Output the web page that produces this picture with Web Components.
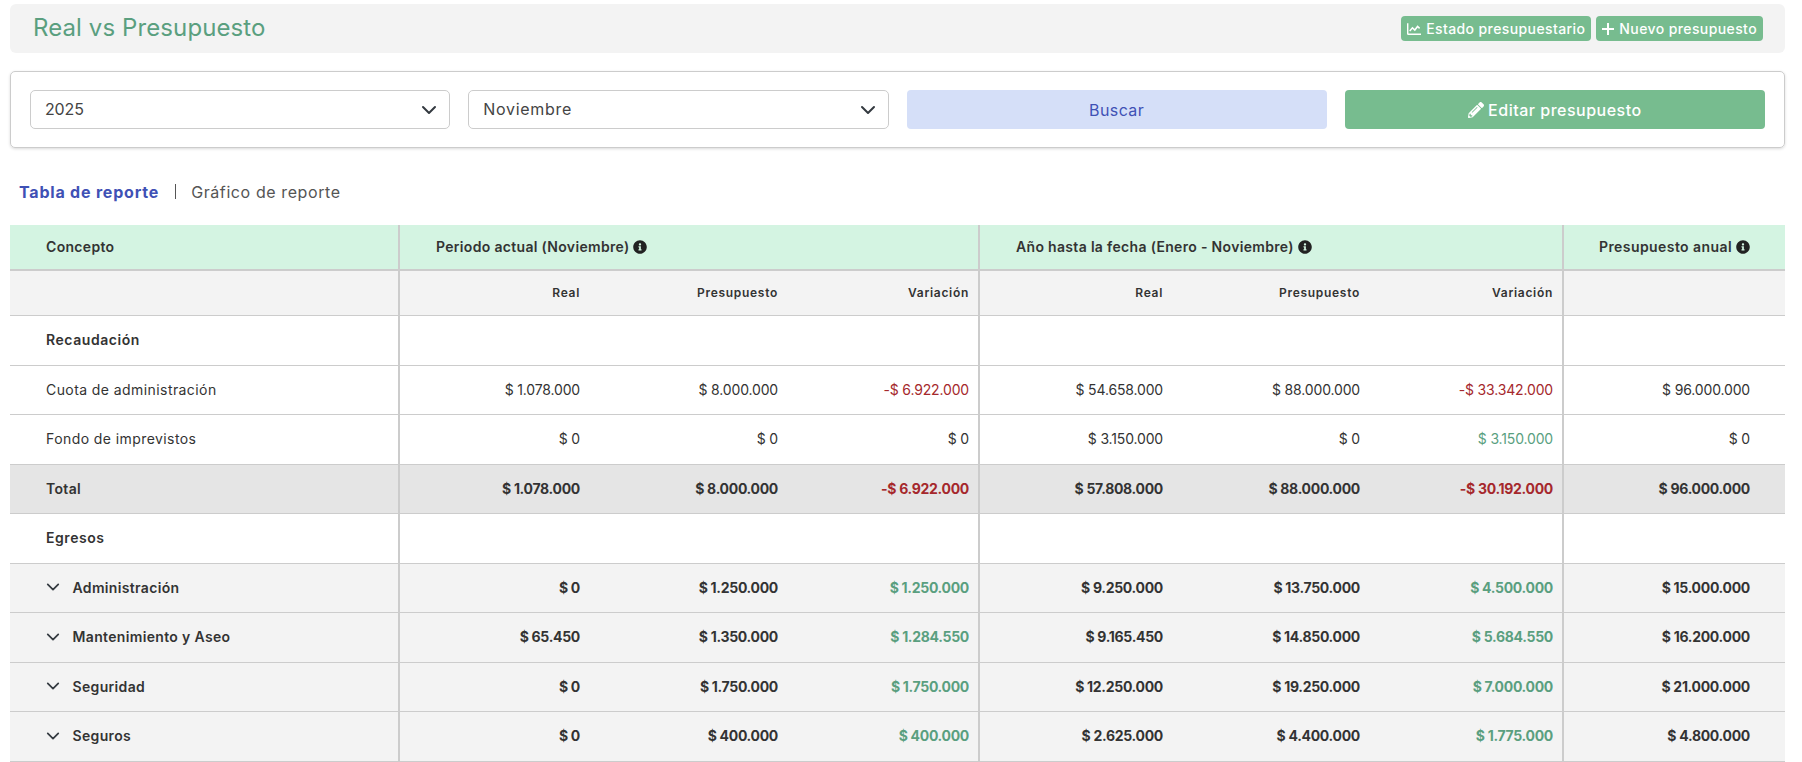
<!DOCTYPE html>
<html lang="es">
<head>
<meta charset="utf-8">
<title>Real vs Presupuesto</title>
<style>
  html, body { margin: 0; background: #fff; }
  body { font-family: Inter, "Open Sans", sans-serif; color: #333; }
</style>
</head>
<body>
<budget-page>
  <title-bar heading="Real vs Presupuesto">
    <green-button small icon="chart">Estado presupuestario</green-button>
    <green-button small icon="plus">Nuevo presupuesto</green-button>
  </title-bar>
  <filter-card>
    <select-box style="letter-spacing:-.15px">2025</select-box>
    <select-box>Noviembre</select-box>
    <search-button>Buscar</search-button>
    <green-button icon="pencil">Editar presupuesto</green-button>
  </filter-card>
  <report-tabs active="Tabla de reporte" other="Gráfico de reporte"></report-tabs>
  <report-table></report-table>
</budget-page>

<script>
const ICONS = {
  chart: `<svg viewBox="0 0 512 512" width="14" height="14" fill="none" stroke="currentColor" stroke-width="52"><path d="M26 50v376a22 22 0 0 0 22 22h464"/><path d="M100 330l100-116 86 80 100-130 76 70" stroke-width="56"/></svg>`,
  plus: `<svg viewBox="0 0 12 12" width="12" height="12" fill="none" stroke="currentColor" stroke-width="2"><path d="M6 0v12M0 6h12"/></svg>`,
  pencil: `<svg viewBox="0 0 512 512" width="16" height="16" fill="currentColor"><path d="M497.9 142.1l-46.1 46.1c-4.7 4.7-12.3 4.7-17 0l-111-111c-4.7-4.7-4.7-12.3 0-17l46.1-46.1c18.7-18.7 49.1-18.7 67.9 0l60.1 60.1c18.8 18.7 18.8 49.1 0 67.9zM284.2 99.8L21.6 362.4.4 483.9c-2.9 16.4 11.4 30.6 27.8 27.8l121.5-21.3 262.6-262.6c4.7-4.7 4.7-12.3 0-17l-111-111c-4.8-4.7-12.4-4.7-17.1 0zM124.1 339.9c-5.5-5.5-5.5-14.3 0-19.8l154-154c5.5-5.5 14.3-5.5 19.8 0s5.5 14.3 0 19.8l-154 154c-5.5 5.5-14.3 5.5-19.8 0zM88 424h48v36.3l-64.5 11.3-31.1-31.1L51.7 376H88v48z"/></svg>`,
  info: `<svg viewBox="0 0 512 512" width="14" height="14" fill="#222"><path d="M256 8C119.043 8 8 119.083 8 256c0 136.997 111.043 248 248 248s248-111.003 248-248C504 119.083 392.957 8 256 8zm0 110c23.196 0 42 18.804 42 42s-18.804 42-42 42-42-18.804-42-42 18.804-42 42-42zm56 254c0 6.627-5.373 12-12 12h-88c-6.627 0-12-5.373-12-12v-24c0-6.627 5.373-12 12-12h12v-64h-12c-6.627 0-12-5.373-12-12v-24c0-6.627 5.373-12 12-12h64c6.627 0 12 5.373 12 12v100h12c6.627 0 12 5.373 12 12v24z"/></svg>`,
  chevron: `<svg viewBox="0 0 16 16" width="16" height="16" fill="none" stroke="#343a40" stroke-width="2" stroke-linecap="round" stroke-linejoin="round"><path d="M2 5l6 6 6-6"/></svg>`
};

class BudgetPage extends HTMLElement {
  constructor() {
    super();
    this.attachShadow({ mode: "open" }).innerHTML = `
      <style>
        :host { display: block; padding: 4px 17px 0 10px; }
      </style>
      <slot></slot>`;
  }
}

class TitleBar extends HTMLElement {
  constructor() {
    super();
    this.attachShadow({ mode: "open" }).innerHTML = `
      <style>
        :host {
          display: flex; align-items: center; justify-content: space-between;
          height: 49px; padding: 0 22px 0 23px;
          background: #f3f3f3; border-radius: 6px;
        }
        h1 { margin: 0 0 2px; font-size: 24px; font-weight: 400; letter-spacing: .1px; color: #5a9f7f; }
        div { display: flex; gap: 5px; }
      </style>
      <h1>${this.getAttribute("heading")}</h1>
      <div><slot></slot></div>`;
  }
}

class GreenButton extends HTMLElement {
  constructor() {
    super();
    const icon = ICONS[this.getAttribute("icon")] || "";
    this.attachShadow({ mode: "open" }).innerHTML = `
      <style>
        :host {
          display: flex; align-items: center; justify-content: center; gap: 4px;
          height: 39px; border-radius: 4px;
          background: #77bc8f; color: #fff;
          font-size: 16px; font-weight: 500; letter-spacing: .5px;
        }
        :host([small]) {
          height: 25px; padding: 0 6px; gap: 5px;
          font-size: 14px; letter-spacing: .4px;
        }
        svg { display: block; }
      </style>
      ${icon}<slot></slot>`;
  }
}

class SearchButton extends HTMLElement {
  constructor() {
    super();
    this.attachShadow({ mode: "open" }).innerHTML = `
      <style>
        :host {
          display: flex; align-items: center; justify-content: center;
          height: 39px; border-radius: 4px;
          background: #d5dff8; color: #3f51b5;
          font-size: 16px; letter-spacing: .4px;
        }
      </style>
      <slot></slot>`;
  }
}

class SelectBox extends HTMLElement {
  constructor() {
    super();
    this.attachShadow({ mode: "open" }).innerHTML = `
      <style>
        :host {
          display: flex; align-items: center; justify-content: space-between;
          height: 39px; box-sizing: border-box; padding: 0 12px 0 14px;
          border: 1px solid #ccc; border-radius: 5px;
          color: #444; font-size: 16px; letter-spacing: .7px;
        }
        span { padding-bottom: 2px; }
      </style>
      <span><slot></slot></span>${ICONS.chevron}`;
  }
}

class FilterCard extends HTMLElement {
  constructor() {
    super();
    this.attachShadow({ mode: "open" }).innerHTML = `
      <style>
        :host {
          display: grid; grid-template-columns: repeat(4, 1fr); column-gap: 18px;
          height: 77px; box-sizing: border-box; margin-top: 18px; padding: 18px 19px 0;
          border: 1px solid #ccc; border-radius: 5px;
          box-shadow: 0 1px 3px rgba(0,0,0,.15);
        }
      </style>
      <slot></slot>`;
  }
}

class ReportTabs extends HTMLElement {
  constructor() {
    super();
    this.attachShadow({ mode: "open" }).innerHTML = `
      <style>
        :host {
          display: flex; align-items: center; height: 77px; box-sizing: border-box;
          padding: 10px 0 0 9px;
          font-size: 16px;
        }
        b { font-weight: 700; letter-spacing: .8px; color: #3f51b5; }
        i { width: 1px; height: 15px; margin: 0 15px 0 16px; background: #555; }
        span { letter-spacing: .6px; color: #555; }
      </style>
      <b>${this.getAttribute("active")}</b><i></i><span>${this.getAttribute("other")}</span>`;
  }
}

// fila: [concepto, tipo, ...valores] con prefijo r/g para rojo y verde
const ROWS = [
  ["Recaudación", "head"],
  ["Cuota de administración", "", "$ 1.078.000", "$ 8.000.000", "r-$ 6.922.000", "$ 54.658.000", "$ 88.000.000", "r-$ 33.342.000", "$ 96.000.000"],
  ["Fondo de imprevistos", "", "$ 0", "$ 0", "$ 0", "$ 3.150.000", "$ 0", "g$ 3.150.000", "$ 0"],
  ["Total", "total", "$ 1.078.000", "$ 8.000.000", "r-$ 6.922.000", "$ 57.808.000", "$ 88.000.000", "r-$ 30.192.000", "$ 96.000.000"],
  ["Egresos", "head"],
  ["Administración", "group", "$ 0", "$ 1.250.000", "g$ 1.250.000", "$ 9.250.000", "$ 13.750.000", "g$ 4.500.000", "$ 15.000.000"],
  ["Mantenimiento y Aseo", "group", "$ 65.450", "$ 1.350.000", "g$ 1.284.550", "$ 9.165.450", "$ 14.850.000", "g$ 5.684.550", "$ 16.200.000"],
  ["Seguridad", "group", "$ 0", "$ 1.750.000", "g$ 1.750.000", "$ 12.250.000", "$ 19.250.000", "g$ 7.000.000", "$ 21.000.000"],
  ["Seguros", "group", "$ 0", "$ 400.000", "g$ 400.000", "$ 2.625.000", "$ 4.400.000", "g$ 1.775.000", "$ 4.800.000"]
];

class ReportTable extends HTMLElement {
  constructor() {
    super();
    const cell = (v, i) => {
      const tone = v[0] === "r" ? "red" : v[0] === "g" ? "green" : "";
      const text = tone ? v.slice(1) : v;
      const edge = i === 2 || i === 5 ? " edge" : "";
      return `<td class="num ${tone}${edge}">${text}</td>`;
    };
    const rows = ROWS.map(([label, kind, ...vals]) => {
      const tds = vals.length ? vals.map(cell).join("") :
        `<td></td><td></td><td class="edge"></td><td></td><td></td><td class="edge"></td><td></td>`;
      const name = kind === "group" ? `<div class="row-name">${ICONS.chevron}<span>${label}</span></div>` : label;
      return `<tr class="${kind}"><td class="edge label">${name}</td>${tds}</tr>`;
    }).join("");
    this.attachShadow({ mode: "open" }).innerHTML = `
      <style>
        :host { display: block; color: #333; }
        table { width: 100%; border-collapse: separate; border-spacing: 0; table-layout: fixed; font-size: 14px; }
        td, th { padding: 0 10px 2px 0; border-bottom: 1px solid #ccc; box-sizing: border-box; height: 49.5px; }
        .edge { border-right: 2px solid #ccc; }
        td.edge.num, .sub th.edge { padding-right: 9px; }
        .label { padding-left: 36px; letter-spacing: .42px; }
        th { font-weight: 600; text-align: left; }
        thead .top th { height: 46.3px; background: #d4f4e2; border-bottom-width: 2px; letter-spacing: .32px; padding-left: 36px; }
        thead .top th:last-child { padding-left: 35px; letter-spacing: .42px; }
        thead .sub th { height: 45px; background: #f3f3f3; font-size: 12px; text-align: right; letter-spacing: .7px; }
        th svg { vertical-align: -2px; }
        .num { text-align: right; letter-spacing: -.16px; }
        .red { color: #a5282c; }
        .green { color: #5a9f7f; }
        .head .label { font-weight: 600; letter-spacing: .55px; }
        .total td, .group td { font-weight: 700; }
        .total td.num, .group td.num { letter-spacing: -.3px; }
        .total td { background: #e5e5e5; }
        .group td { background: #f3f3f3; }
        .total .label, .group .label { font-weight: 600; letter-spacing: .34px; }
        .row-name { display: flex; align-items: center; }
        .row-name svg { width: 14px; height: 14px; margin-right: 13px; margin-left: -.5px; }
        tr td:last-child { padding-right: 35px; }
      </style>
      <table>
        <colgroup>
          <col style="width:390px"><col style="width:190px"><col style="width:198px"><col style="width:192px">
          <col style="width:193px"><col style="width:197px"><col style="width:194px"><col>
        </colgroup>
        <thead>
          <tr class="top">
            <th class="edge">Concepto</th>
            <th class="edge" colspan="3">Periodo actual (Noviembre) ${ICONS.info}</th>
            <th class="edge" colspan="3">Año hasta la fecha (Enero - Noviembre) ${ICONS.info}</th>
            <th>Presupuesto anual ${ICONS.info}</th>
          </tr>
          <tr class="sub">
            <th class="edge"></th>
            <th>Real</th><th>Presupuesto</th><th class="edge">Variación</th>
            <th>Real</th><th>Presupuesto</th><th class="edge">Variación</th>
            <th></th>
          </tr>
        </thead>
        <tbody>${rows}</tbody>
      </table>`;
  }
}

customElements.define("budget-page", BudgetPage);
customElements.define("title-bar", TitleBar);
customElements.define("green-button", GreenButton);
customElements.define("search-button", SearchButton);
customElements.define("select-box", SelectBox);
customElements.define("filter-card", FilterCard);
customElements.define("report-tabs", ReportTabs);
customElements.define("report-table", ReportTable);
</script>
</body>
</html>
